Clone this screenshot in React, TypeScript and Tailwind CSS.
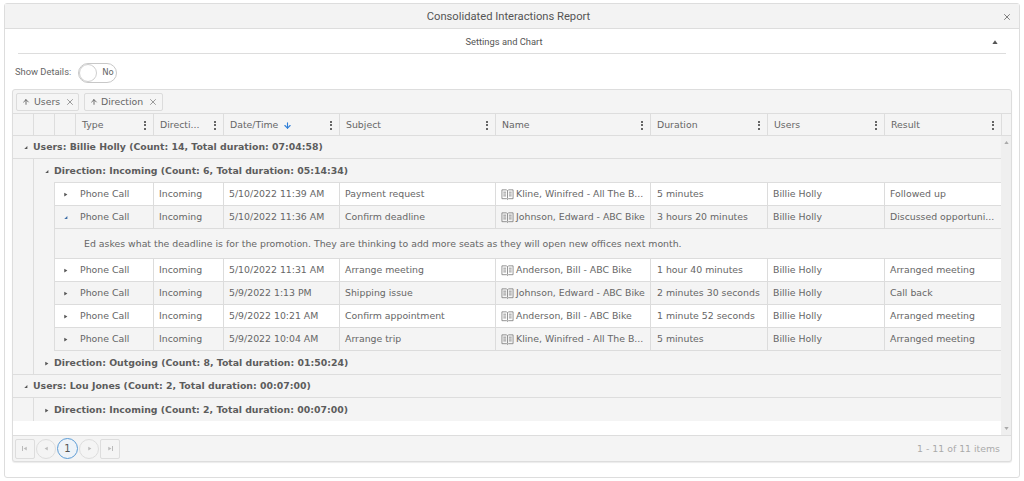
import { ArrowDown, ArrowUp, X } from 'lucide-react'

const ROW_COLS = 'grid grid-cols-[98px_70px_116px_156px_155px_117px_117px_117px]'

type Row = {
  date: string
  subject: string
  name: string
  duration: string
  result: string
  open?: boolean
  note?: string
}

const ROWS: Row[] = [
  { date: '5/10/2022 11:39 AM', subject: 'Payment request', name: 'Kline, Winifred - All The B...', duration: '5 minutes', result: 'Followed up' },
  {
    date: '5/10/2022 11:36 AM',
    subject: 'Confirm deadline',
    name: 'Johnson, Edward - ABC Bike',
    duration: '3 hours 20 minutes',
    result: 'Discussed opportuni...',
    open: true,
    note: 'Ed askes what the deadline is for the promotion. They are thinking to add more seats as they will open new offices next month.',
  },
  { date: '5/10/2022 11:31 AM', subject: 'Arrange meeting', name: 'Anderson, Bill - ABC Bike', duration: '1 hour 40 minutes', result: 'Arranged meeting' },
  { date: '5/9/2022 1:13 PM', subject: 'Shipping issue', name: 'Johnson, Edward - ABC Bike', duration: '2 minutes 30 seconds', result: 'Call back' },
  { date: '5/9/2022 10:21 AM', subject: 'Confirm appointment', name: 'Anderson, Bill - ABC Bike', duration: '1 minute 52 seconds', result: 'Arranged meeting' },
  { date: '5/9/2022 10:04 AM', subject: 'Arrange trip', name: 'Kline, Winifred - All The B...', duration: '5 minutes', result: 'Arranged meeting' },
]

const HEADERS = [
  { label: 'Type', w: 'w-[78px]' },
  { label: 'Directi...', w: 'w-[70px]' },
  { label: 'Date/Time', w: 'w-[116px]', sorted: true },
  { label: 'Subject', w: 'w-[156px]' },
  { label: 'Name', w: 'w-[155px]' },
  { label: 'Duration', w: 'w-[117px]' },
  { label: 'Users', w: 'w-[117px]' },
  { label: 'Result', w: 'w-[117px]' },
]

function Tri({ dir, className }: { dir: 'right' | 'open' | 'up' | 'down' | 'left'; className?: string }) {
  const points = {
    right: '2,1 7,4 2,7',
    open: '7,1.5 7,6.5 2,6.5',
    up: '4,1.5 7.5,6.5 0.5,6.5',
    down: '0.5,1.5 7.5,1.5 4,6.5',
    left: '6,1 6,7 1,4',
  }[dir]
  return (
    <svg viewBox="0 0 8 8" className={className ?? 'w-[6px] h-[6px] text-[#555] shrink-0'} fill="currentColor">
      <polygon points={points} />
    </svg>
  )
}

function Kebab() {
  return (
    <span className="flex flex-col gap-[1.5px] ml-auto">
      <span className="w-[2px] h-[2px] bg-[#666]" />
      <span className="w-[2px] h-[2px] bg-[#666]" />
      <span className="w-[2px] h-[2px] bg-[#666]" />
    </span>
  )
}

function BookIcon() {
  return (
    <svg viewBox="0 0 14 14" className="w-[13px] h-[13px] shrink-0 text-[#808080]" fill="none" stroke="currentColor" strokeWidth="0.9">
      <path d="M1 2h5l1 1 1-1h5v9.5H8l-1 1-1-1H1z" />
      <path d="M7 3v8.5" />
      <path d="M2.5 4.5h3M2.5 6.5h3M2.5 8.5h3M8.5 4.5h3M8.5 6.5h3M8.5 8.5h3" />
    </svg>
  )
}

function Chip({ label, gap, className }: { label: string; gap: string; className: string }) {
  return (
    <div className={`h-[18px] flex items-center border border-[#dcdcdc] rounded-[2px] bg-[#f5f5f5] pl-[5px] pt-[1px] ${className}`}>
      <ArrowUp className="w-[8px] h-[8px] text-[#555]" strokeWidth={2.5} />
      <span className={gap}>{label}</span>
      <X className="w-[10px] h-[10px] text-[#888] ml-[5px]" strokeWidth={2} />
    </div>
  )
}

function GroupLine({ open, children, className }: { open: boolean; children: string; className: string }) {
  return (
    <div className={`flex items-center pt-[1px] font-bold text-[#5c5c5c] ${className}`}>
      <Tri dir={open ? 'open' : 'right'} className="w-[5px] h-[5px] text-[#555] shrink-0" />
      <span className="ml-[5px]">{children}</span>
    </div>
  )
}

function DataRow({ row, index }: { row: Row; index: number }) {
  const shaded = index % 2 === 1
  return (
    <>
      <div className={`${ROW_COLS} h-[23px] border-b border-[#dcdcdc] ${shaded ? 'bg-[#f4f4f4]' : 'bg-white'}`}>
        <div className="flex items-center pl-[8px] pt-[1px]">
          {row.open ? (
            <Tri dir="open" className="w-[5px] h-[5px] text-[#3f6fa8] shrink-0" />
          ) : (
            <Tri dir="right" className="w-[5px] h-[5px] text-[#555] shrink-0" />
          )}
          <span className="ml-[12px]">Phone Call</span>
        </div>
        <div className="flex items-center pl-[5px] pt-[1px] border-l border-[#dcdcdc]">Incoming</div>
        <div className="flex items-center pl-[5px] pt-[1px] border-l border-[#dcdcdc]">{row.date}</div>
        <div className="flex items-center pl-[5px] pt-[1px] border-l border-[#dcdcdc]">{row.subject}</div>
        <div className="flex items-center pl-[5px] pt-[1px] border-l border-[#dcdcdc] whitespace-nowrap">
          <BookIcon />
          <span className="ml-[2px]">{row.name}</span>
        </div>
        <div className="flex items-center pl-[6px] pt-[1px] border-l border-[#dcdcdc] whitespace-nowrap">{row.duration}</div>
        <div className="flex items-center pl-[5px] pt-[1px] border-l border-[#dcdcdc]">Billie Holly</div>
        <div className="flex items-center pl-[5px] pt-[1px] border-l border-[#dcdcdc] whitespace-nowrap">{row.result}</div>
      </div>
      {row.note && (
        <div className="h-[30px] flex items-center pl-[29px] pt-[1px] bg-[#f4f4f4] border-b border-[#dcdcdc] whitespace-nowrap">
          {row.note}
        </div>
      )}
    </>
  )
}

export default function App() {
  return (
    <div className="w-[1024px] h-[481px] bg-white pt-[3px] pl-[4px] font-['DejaVu_Sans',sans-serif] text-[9.35px] text-[#666] overflow-hidden">
      <div className="w-[1016px] h-[475px] border border-[#dddddd] rounded-[3px] flex flex-col">
        <div className="h-[25px] shrink-0 bg-[#f3f3f3] border-b border-[#dddddd] flex items-center pl-[10px] pr-[7px] pt-[2px] font-['Roboto',sans-serif] text-[11.2px] text-[#555]">
          <span className="flex-1 text-center">Consolidated Interactions Report</span>
          <X className="w-[10px] h-[10px] text-[#666]" strokeWidth={2} />
        </div>

        <div className="h-[25px] shrink-0 mx-[13px] border-b border-[#dddddd] flex items-center pr-[8px] pt-[2px] font-['Roboto',sans-serif] text-[9.35px] text-[#555]">
          <span className="flex-1 text-center -translate-x-[1px]">Settings and Chart</span>
          <Tri dir="up" className="w-[6px] h-[6px] text-[#555]" />
        </div>

        <div className="h-[35px] shrink-0 flex items-center pl-[10px] pt-[2px] font-['Roboto',sans-serif] text-[9.35px] text-[#666]">
          <span>Show Details:</span>
          <div className="ml-[7px] w-[39px] h-[20px] rounded-full border border-[#c8c8c8] bg-white flex items-center">
            <span className="w-[18px] h-[18px] rounded-full border border-[#cfcfcf] bg-white shrink-0" />
            <span className="ml-[5px] text-[#666] text-[8.5px] font-['DejaVu_Sans',sans-serif]">No</span>
          </div>
        </div>

        <div className="ml-[7px] w-[1000px] h-[373px] border border-[#dddddd] rounded-[3px] flex flex-col bg-[#f4f4f4] shadow-[0_1px_1px_rgba(0,0,0,0.08)]">
          <div className="h-[24px] shrink-0 flex items-center pl-[3px] gap-[5px] border-b border-[#dddddd]">
            <Chip label="Users" gap="ml-[4px]" className="w-[63px]" />
            <Chip label="Direction" gap="ml-[3px]" className="w-[79px]" />
          </div>

          <div className="h-[22px] shrink-0 flex border-b border-[#dddddd]">
            <div className="w-[21px] border-r border-[#dddddd]" />
            <div className="w-[21px] border-r border-[#dddddd]" />
            <div className="w-[21px] border-r border-[#dddddd]" />
            {HEADERS.map((h) => (
              <div key={h.label} className={`${h.w} flex items-center pl-[6px] pr-[7px] pt-[1px] border-r border-[#dddddd]`}>
                <span>{h.label}</span>
                {h.sorted && <ArrowDown className="w-[9px] h-[9px] ml-[5px] text-[#2f7fd8]" strokeWidth={3} />}
                <Kebab />
              </div>
            ))}
          </div>

          <div className="flex-1 min-h-0 flex">
            <div className="w-[988px] bg-white overflow-hidden">
              <div className="bg-[#f4f4f4]">
                <GroupLine open className="h-[23px] pl-[10px] border-b border-[#dddddd]">
                  Users: Billie Holly (Count: 14, Total duration: 07:04:58)
                </GroupLine>
                <div className="ml-[20px] border-l border-[#dddddd]">
                  <GroupLine open className="h-[23px] pl-[10px]">
                    Direction: Incoming (Count: 6, Total duration: 05:14:34)
                  </GroupLine>
                  <div className="ml-[20px] border-l border-t border-[#dddddd]">
                    {ROWS.map((row, i) => (
                      <DataRow key={row.date} row={row} index={i} />
                    ))}
                  </div>
                  <GroupLine open={false} className="h-[23px] pl-[10px]">
                    Direction: Outgoing (Count: 8, Total duration: 01:50:24)
                  </GroupLine>
                </div>
                <GroupLine open className="h-[24px] pl-[10px] border-y border-[#dddddd]">
                  Users: Lou Jones (Count: 2, Total duration: 00:07:00)
                </GroupLine>
                <div className="ml-[20px] border-l border-[#dddddd]">
                  <GroupLine open={false} className="h-[23px] pl-[10px]">
                    Direction: Incoming (Count: 2, Total duration: 00:07:00)
                  </GroupLine>
                </div>
              </div>
            </div>
            <div className="w-[10px] bg-[#efefef] flex flex-col items-center justify-between py-[4px]">
              <Tri dir="up" className="w-[5px] h-[5px] text-[#aaa]" />
              <Tri dir="down" className="w-[5px] h-[5px] text-[#aaa]" />
            </div>
          </div>

          <div className="h-[26px] shrink-0 flex items-center pl-[2px] pr-[11px] border-t border-[#dddddd]">
            <span className="w-[20px] h-[20px] border border-[#dddddd] rounded-[2px] flex items-center justify-center">
              <span className="w-[1px] h-[5px] bg-[#bbb]" />
              <Tri dir="left" className="w-[5px] h-[5px] text-[#bbb]" />
            </span>
            <span className="ml-[1px] w-[20px] h-[20px] border border-[#dddddd] rounded-full flex items-center justify-center">
              <Tri dir="left" className="w-[5px] h-[5px] text-[#bbb]" />
            </span>
            <span className="ml-[1px] w-[21px] h-[21px] border border-[#5b9bd5] rounded-full bg-[#eef3f8] flex items-center justify-center text-[#555] text-[10px]">
              1
            </span>
            <span className="ml-[1px] w-[20px] h-[20px] border border-[#dddddd] rounded-full flex items-center justify-center">
              <Tri dir="right" className="w-[5px] h-[5px] text-[#bbb]" />
            </span>
            <span className="ml-[1px] w-[20px] h-[20px] border border-[#dddddd] rounded-[2px] flex items-center justify-center">
              <Tri dir="right" className="w-[5px] h-[5px] text-[#bbb]" />
              <span className="w-[1px] h-[5px] bg-[#bbb]" />
            </span>
            <span className="ml-auto pt-[1px] text-[#aaa]">1 - 11 of 11 items</span>
          </div>
        </div>
      </div>
    </div>
  )
}
